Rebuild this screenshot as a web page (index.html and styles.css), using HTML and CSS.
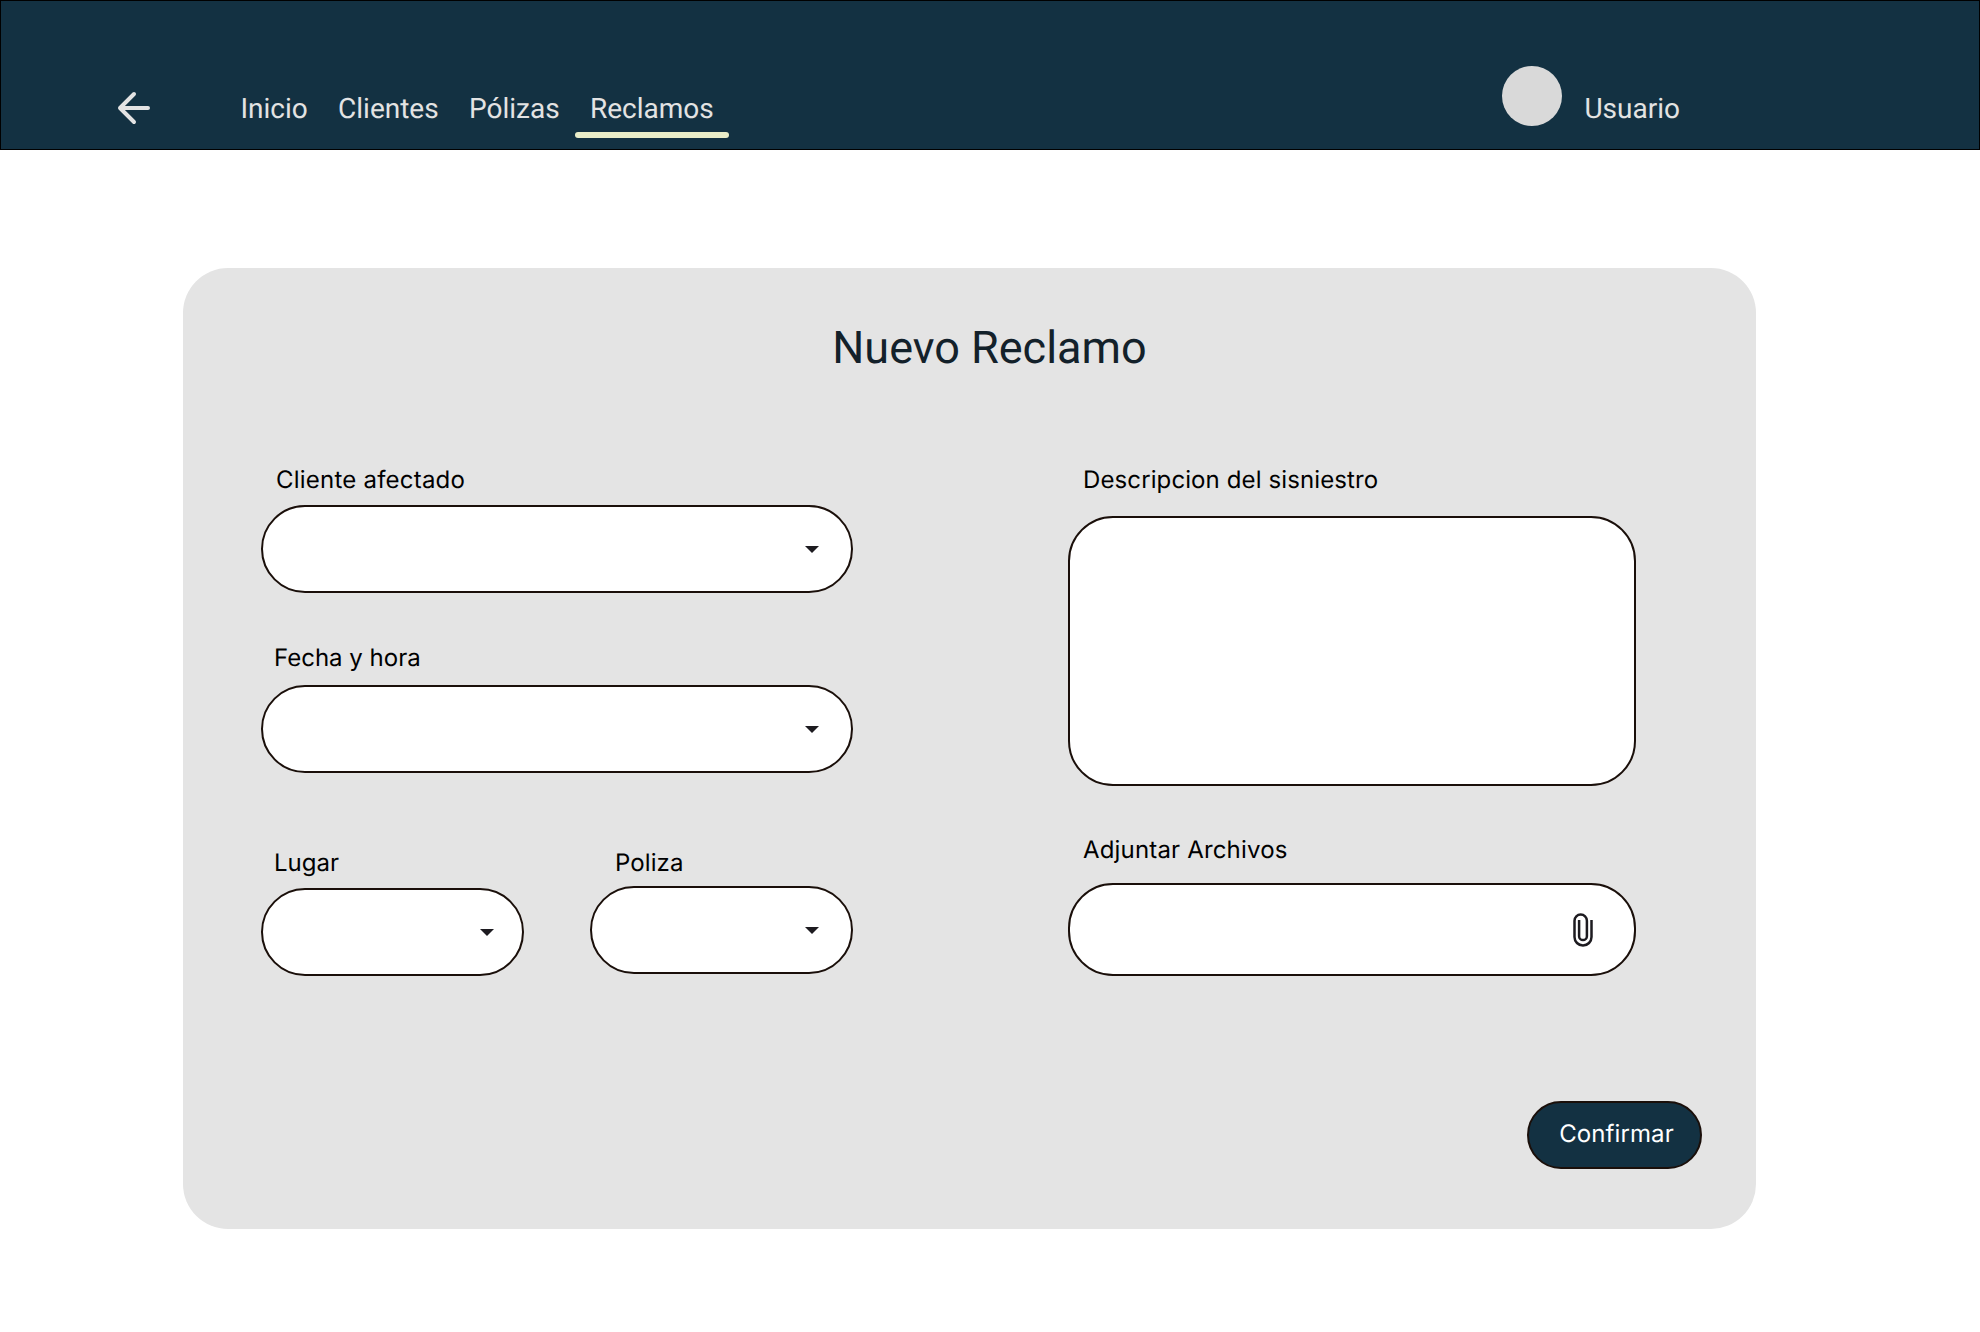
FILE: index.html
```html
<!DOCTYPE html>
<html lang="es">
<head>
  <meta charset="utf-8">
  <title>Nuevo Reclamo</title>
  <link rel="stylesheet" href="styles.css">
</head>
<body>
  <header class="topbar">
    <a class="back" href="#" aria-label="Volver">
      <svg width="48" height="48" viewBox="0 0 48 48" fill="none" stroke="#e3e3e3" stroke-width="4" stroke-linecap="round" stroke-linejoin="round"><path d="M38 24H10M24 38L10 24L24 10"/></svg>
    </a>
    <nav class="nav">
      <a class="nav-link" href="#">Inicio</a>
      <a class="nav-link" href="#">Clientes</a>
      <a class="nav-link" href="#">Pólizas</a>
      <a class="nav-link active" href="#">Reclamos</a>
    </nav>
    <div class="user">
      <span class="avatar"></span>
      <span class="user-name">Usuario</span>
    </div>
  </header>

  <main class="card">
    <h1 class="title">Nuevo Reclamo</h1>
    <form class="form">
      <div class="column">
        <div class="group client">
          <label class="label">Cliente afectado</label>
          <div class="field"><svg class="caret" viewBox="0 0 14 7"><path d="M0 0H14L7 7Z"/></svg></div>
        </div>
        <div class="group date">
          <label class="label">Fecha y hora</label>
          <div class="field"><svg class="caret" viewBox="0 0 14 7"><path d="M0 0H14L7 7Z"/></svg></div>
        </div>
        <div class="pair">
          <div class="group place">
            <label class="label">Lugar</label>
            <div class="field"><svg class="caret" viewBox="0 0 14 7"><path d="M0 0H14L7 7Z"/></svg></div>
          </div>
          <div class="group policy">
            <label class="label">Poliza</label>
            <div class="field"><svg class="caret" viewBox="0 0 14 7"><path d="M0 0H14L7 7Z"/></svg></div>
          </div>
        </div>
      </div>
      <div class="column">
        <div class="group description">
          <label class="label">Descripcion del sisniestro</label>
          <div class="field area"></div>
        </div>
        <div class="group files">
          <label class="label">Adjuntar Archivos</label>
          <div class="field file">
            <svg class="clip" viewBox="0 0 20 34" fill="none" stroke="#1d1b20" stroke-width="2.5"><path d="M18.5 7V24A8.5 8.5 0 0 1 1.5 24V7.7A6.2 6.2 0 0 1 13.9 7.7V23.2A3.9 3.9 0 0 1 6.1 23.2V7"/></svg>
          </div>
        </div>
      </div>
    </form>
    <button class="confirm" type="button">Confirmar</button>
  </main>
</body>
</html>
```

FILE: styles.css
```css
* {
  box-sizing: border-box;
}

body {
  margin: 0;
  min-height: 1332px;
  background: #fff;
  color: #000;
  font-family: Inter, sans-serif;
  text-rendering: geometricPrecision;
}

.topbar {
  display: flex;
  align-items: flex-start;
  height: 150px;
  padding-left: 109px;
  border: 1px solid #000;
  background: #133142;
  font: 400 28px/36px Roboto, sans-serif;
}

.back {
  height: 48px;
  margin-top: 83px;
}

.nav {
  display: flex;
  margin: 90px 0 0 67.3px;
}

.nav-link {
  height: 47px;
  padding: 0 15.15px;
  color: #e3e3e3;
  text-decoration: none;
}

.nav-link.active::after {
  content: "";
  display: block;
  height: 6px;
  margin: 5px -15px 0;
  border-radius: 3px;
  background: #e9edc9;
}

.user {
  display: flex;
  margin: 65px 299px 0 auto;
  color: #e3e3e3;
}

.avatar {
  width: 60px;
  height: 60px;
  border-radius: 50%;
  background: #d9d9d9;
}

.user-name {
  margin: 25px 0 0 22px;
}

.card {
  display: flex;
  flex-direction: column;
  width: 1573px;
  height: 961px;
  margin: 118px 0 0 183px;
  padding: 54px 54px 60px 78px;
  border-radius: 45px;
  background: #e4e4e4;
}

.title {
  margin: 0 0 0 16px;
  color: #13212a;
  font: 400 45px/52px Roboto, sans-serif;
  text-align: center;
}

.form {
  display: grid;
  grid-template-columns: 592px 568px;
  column-gap: 215px;
  margin-top: 91px;
}

.group {
  display: flex;
  flex-direction: column;
}

.label {
  padding-left: 13px;
  font-size: 24px;
  line-height: 29px;
}

.client .label,
.description .label,
.files .label {
  padding-left: 15px;
}

.client .label {
  letter-spacing: 0.22px;
}

.description .label {
  letter-spacing: 0.11px;
}

.files .label {
  letter-spacing: 0.17px;
}

.field {
  display: flex;
  align-items: center;
  justify-content: flex-end;
  height: 88px;
  margin-top: 11px;
  padding-right: 32px;
  border: 2px solid #1a0f0a;
  border-radius: 45px;
  background: #fff;
}

.caret {
  width: 14px;
  height: 7px;
  fill: #1d1b20;
}

.date {
  margin-top: 50px;
}

.date .field {
  margin-top: 13px;
}

.pair {
  display: grid;
  grid-template-columns: 263px 263px;
  justify-content: space-between;
  margin-top: 75px;
}

.place .field {
  margin-top: 11px;
  padding-right: 28px;
}

.policy .label {
  padding-left: 25px;
  letter-spacing: 0.1px;
}

.policy .field {
  margin-top: 9px;
}

.description .field {
  height: 270px;
  margin-top: 22px;
}

.files {
  margin-top: 49px;
}

.files .field {
  height: 93px;
  margin-top: 19px;
  padding-right: 41px;
}

.clip {
  width: 20px;
  height: 34px;
}

.confirm {
  align-self: flex-end;
  width: 175px;
  height: 68px;
  margin-top: auto;
  padding: 0 0 4px 4px;
  border: 2px solid #1a0f0a;
  border-radius: 34px;
  background: #133142;
  color: #fff;
  font: 400 24px/29px Inter, sans-serif;
  letter-spacing: 0.1px;
  text-rendering: inherit;
}
```
